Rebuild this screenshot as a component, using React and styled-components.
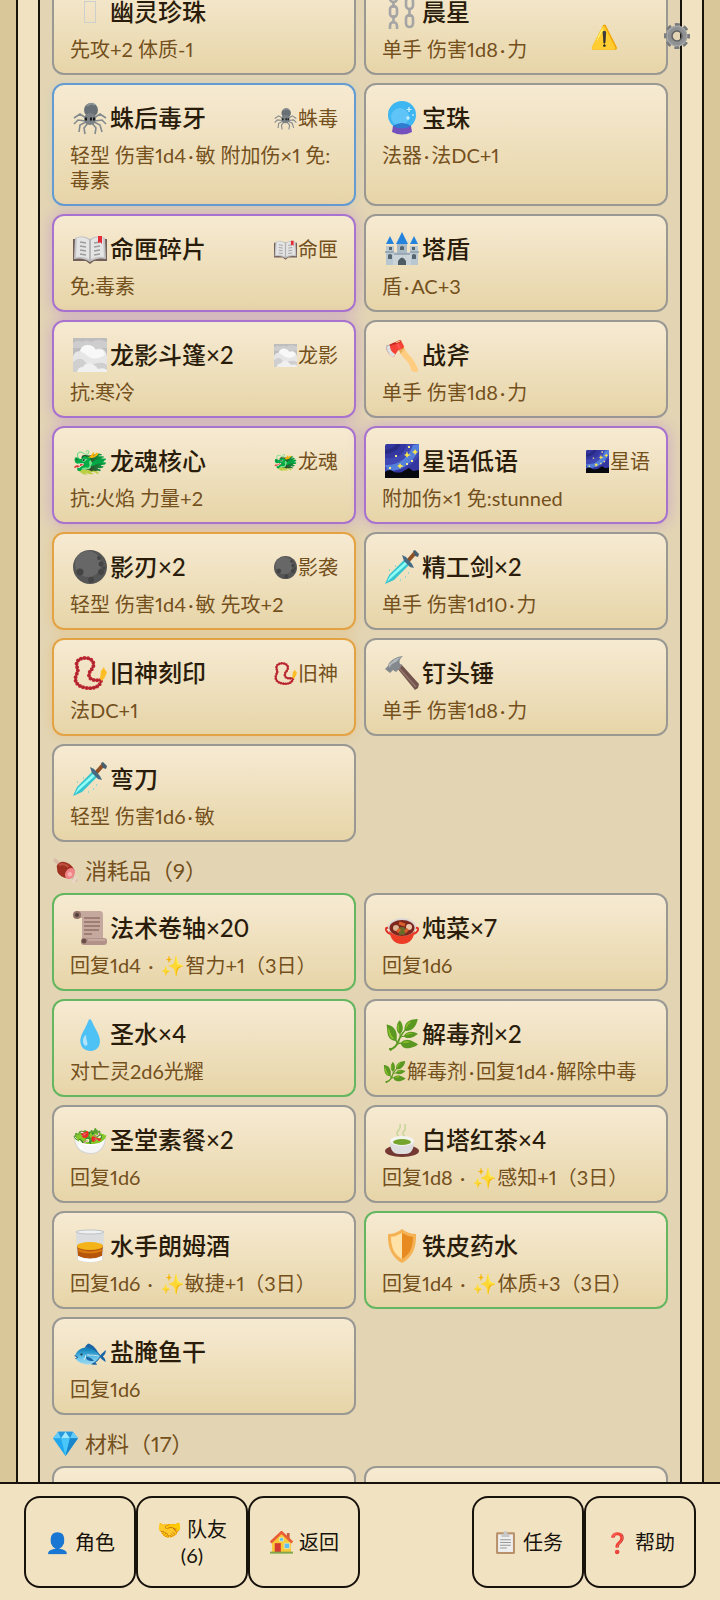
import { Fragment } from "react";
import styled, { createGlobalStyle } from "styled-components";

const GlobalStyle = createGlobalStyle`
    *{
        box-sizing: border-box;
    }
    body{
        margin: 0;
        background: #dac799;
        font-family: Lato, "Noto Sans CJK SC", "Noto Color Emoji", sans-serif;
        font-variant-numeric: proportional-nums;
    }
`;

const rarityColors = {
    common: "#999893",
    uncommon: "#65b660",
    rare: "#639bd2",
    epic: "#a872cf",
    legendary: "#e3a345",
};

const rarityGlow = {
    rare: "0 0 8px rgba(99, 155, 210, .15)",
    epic: "0 0 16px rgba(168, 100, 220, .4)",
    legendary: "0 0 12px rgba(230, 160, 60, .3)",
};

const Screen = styled.div`
    display: flex;
    flex-direction: column;
    height: 100vh;
    overflow: hidden;
`;

const Scroller = styled.main`
    flex: 1;
    min-height: 0;
    overflow: hidden;
    padding: 0 16px;
`;

const Panel = styled.div`
    padding: 0 20px;
    background: #f1e3c1;
    border: 2px solid #17120c;
    border-width: 0 2px;
`;

const Bag = styled.div`
    padding: 0 12px 12px;
    margin-top: -23px;
    background: #e3d5b4;
    border: 2px solid #17120c;
    border-width: 0 2px;
`;

const Heading = styled.h2`
    display: flex;
    align-items: center;
    gap: 6px;
    height: 51px;
    margin: 0;
    padding-top: 2px;
    color: #74501c;
    font-size: 22px;
    font-weight: normal;
    svg{
        margin-top: 3px;
    }
`;

const Grid = styled.ul`
    display: grid;
    grid-template-columns: 1fr 1fr;
    gap: 8px;
    margin: 0;
    padding: 0;
    list-style: none;
`;

const Card = styled.li`
    padding: 10px 16px 11px;
    min-height: 98px;
    background: linear-gradient(#f6ead2, #e7d5a8);
    border: 2px solid ${(props) => rarityColors[props.$rarity]};
    border-radius: 12px;
    box-shadow: ${(props) => rarityGlow[props.$rarity] || "none"};
`;

const CardTop = styled.div`
    display: flex;
    align-items: center;
    height: 46px;
    margin-bottom: 2px;
`;

const Icon = styled.span`
    display: flex;
    justify-content: center;
    width: 40px;
    font-size: 29px;
    line-height: 40px;
`;

const Art = styled.svg`
    flex: none;
    width: ${(props) => props.$size}px;
    height: ${(props) => props.$size}px;
    margin: 0 1px;
    vertical-align: text-bottom;
`;

const MissingIcon = styled.span`
    width: 12px;
    height: 22px;
    border: 1px solid #ccd0cc;
`;

const Name = styled.h3`
    flex: 1;
    margin: 0;
    color: #2a1c0a;
    font-size: 24px;
    font-weight: 500;
    line-height: 36px;
`;

const Tag = styled.span`
    display: flex;
    align-items: center;
    color: #74501c;
    font-size: 20px;
    line-height: 25px;
`;

const Desc = styled.p`
    margin: 0;
    color: #74501c;
    font-size: 20px;
    line-height: 25px;
`;

const Dot = styled.span`
    padding: 0 2px;
`;

const TopButtons = styled.div`
    position: fixed;
    top: 12px;
    right: 20px;
    display: flex;
    gap: 26px;
`;

const TopButton = styled.button`
    display: flex;
    align-items: center;
    justify-content: center;
    width: 46px;
    height: 48px;
    padding: 0;
    background: none;
    border: 0;
    font-family: inherit;
    font-size: 23px;
`;

const Nav = styled.nav`
    display: grid;
    grid-template-columns: repeat(6, 1fr);
    padding: 12px 24px;
    background: #f1e3c1;
    border-top: 2px solid #17120c;
`;

const NavButton = styled.button`
    grid-column: ${(props) => props.$column};
    height: 92px;
    padding: 0 12px;
    background: none;
    border: 2px solid #17120c;
    border-radius: 16px;
    color: #17120c;
    font-family: inherit;
    font-size: 20px;
    line-height: 26px;
`;

// all drawings share a 34x34 view box
const drawings = {
    chain: (
        <g fill="none" stroke="#a5a5a5" strokeWidth="2.6">
            <rect x="5" y="-3" width="7" height="10" rx="3.5" />
            <rect x="5" y="11" width="7" height="11" rx="3.5" />
            <path d="M5 34v-3c0-5 7-5 7 0v3M8.500 6v7M8.500 20v8" />
            <rect x="21" y="3" width="7" height="11" rx="3.500" />
            <rect x="21" y="20" width="7" height="12" rx="3.500" />
            <path d="M24.500 0v5M24.500 13v9" />
        </g>
    ),
    spider: (
        <>
            <path
                d="M13 17 7 13 1 17M13 20l-8-1-4 4M13 21l-6 3-1 7M15 22l-4 5 1 6M21 17l6-4 6 4M21 20l8-1 4 4M21 21l6 3 2 7M19 22l4 5-1 6"
                fill="none"
                stroke="#858a8d"
                strokeWidth="1.600"
            />
            <circle cx="18" cy="9" r="7" fill="#697075" />
            <circle cx="17" cy="18" r="6" fill="#7b8185" />
            <path d="M14 5q4-4 8-1" stroke="#8d9397" strokeWidth="2" fill="none" />
            <path d="M12 18h3M17 18h5" stroke="#17191b" strokeWidth="3" strokeDasharray="2 1" />
        </>
    ),
    orb: (
        <>
            <circle cx="17" cy="14" r="14" fill="#3db6f1" />
            <circle cx="15" cy="16" r="9" fill="#6dcbfa" opacity=".7" />
            <path d="M8 25q9-5 18 0l1 6q-10 5-20 0z" fill="#7450bd" />
            <path d="M8 25q9 5 18 0-9-6-18 0z" fill="#2e7bd0" />
            <path d="M24 6v5M21.500 8.500h5M23 15v4M21 17h4M28 13v2" stroke="#d5f3ff" strokeWidth="1.200" />
        </>
    ),
    book: (
        <>
            <path d="M0 7h34v22H21l-4 3-4-3H0z" fill="#725f5a" />
            <path d="M2 6q8-4 15 1 7-5 15-1l1 21q-9-2-16 3-7-5-16-3z" fill="#c4c4c4" />
            <path d="M4 6q7-2 12 2v19q-6-3-13-2zM30 6q-7-2-12 2v19q6-3 13-2z" fill="#e4e4e4" />
            <path d="m7 10 6 1M7 14l6 1M7 18l6 1M7 22l6 1M21 11l6-1M21 15l6-1M21 19l6-1M21 23l6-1" stroke="#9c9c9c" strokeWidth="1.300" />
            <path d="M17 7v22" stroke="#aaa" />
            <path d="M25 4h4v8l-2-2-2 1z" fill="#e42b35" />
        </>
    ),
    castle: (
        <>
            <path d="M1 14h8v19H1zM25 14h8v19h-8z" fill="#b9c8d0" />
            <path d="M8 20h18v13H8z" fill="#c9d3d8" />
            <path d="M12 12h10v10H12z" fill="#a9bac4" />
            <path d="M17 0l6 12H11zM5 4l4 8H1zM29 4l4 8h-8z" fill="#2484dd" />
            <path d="M13 33v-4q4-7 8 0v4z" fill="#505c64" />
            <path d="M15 18v-3q2-2 4 0v3zM4 18v-3h3v3zM27 18v-3h3v3zM3 27v-4q2-2 4 0v4zM27 27v-4q2-2 4 0v4z" fill="#54656f" />
            <path d="M0 20h9M25 20h9M9 22h16" stroke="#8ea0ab" strokeWidth="1.500" />
        </>
    ),
    fog: (
        <>
            <path d="M0 0h34v34H0z" fill="#bdbdbd" />
            <path d="M0 5q5-4 9-1 5-3 9 0 7-4 16 0v6H0z" fill="#cdcdcd" />
            <path d="M0 19q1-6 7-6 2-7 9-6 5 1 6 4 10-3 12 7v11H0z" fill="#e6e6e6" />
            <path d="M7 13q2-7 9-6 5 1 7 5 8-2 9 5-9 6-16 2-5-4-9-6z" fill="#f8f8f8" />
            <path d="M0 24q8-7 13 1 6 3 8 1 9-3 13 1v7H0z" fill="#cfcfcf" />
            <path d="M4 34q1-5 6-5 4-7 11-2 3 2 4 4 6-2 9 1v2z" fill="#f0f0f0" />
        </>
    ),
    galaxy: (
        <>
            <rect width="34" height="34" rx="2" fill="#3437a0" />
            <path d="M0 14Q18 16 22 0h12v12Q23 28 0 27z" fill="#4048b4" />
            <path d="M0 21Q20 22 28 1l6-1v6Q23 27 3 27z" fill="#5480dc" />
            <path d="M0 8q10-1 14-8" stroke="#282b83" strokeWidth="4" fill="none" />
            <path d="m22 7 1 3 3 1-3 1-1 2-1-2-2-1 2-1zM30 5l1 2 2 1-2 1-1 2-1-2-2-1 2-1zM15 19l1 2 3 1-3 1-1 2-1-2-2-1 2-1z" fill="#ffe74a" />
            <path d="M11 11v2M24 2v2M27 16v2M5 23v2M22 19v2" stroke="#f0e78a" strokeWidth="2" />
            <path d="M0 28q5-4 9 0 4 1 8 0l7-4 4 3 6-1v8H0z" fill="#08080f" />
        </>
    ),
    moon: (
        <>
            <circle cx="17" cy="17" r="17" fill="#555" />
            <circle cx="15" cy="14" r="13" fill="#6c6c6c" opacity=".8" />
            <g fill="#444">
                <circle cx="7" cy="22" r="3.500" />
                <circle cx="18" cy="30" r="3" />
                <circle cx="26" cy="8" r="2" />
                <circle cx="28" cy="14" r="2.500" />
                <circle cx="28" cy="22" r="3" />
                <circle cx="31" cy="18" r="1.500" />
            </g>
        </>
    ),
    dagger: (
        <>
            <path d="M0 34 4 25 20 9l5 5L9 30z" fill="#36c4cf" />
            <path d="m2 32 3-6 16-15 2 2z" fill="#91fff7" />
            <path d="m22 12 8-9" stroke="#8e5024" strokeWidth="4" />
            <path d="m17 5 4 2 6 7 2 4-4-1-6-6z" fill="#456a82" />
            <path d="m28 1 2-1 4 4-1 3-3-1z" fill="#476071" />
            <path d="M4 20h1M10 16h1M15 30h1M23 23h1M20 27h1" stroke="#75d5d7" strokeWidth="1.500" />
        </>
    ),
    beads: (
        <>
            <path
                d="M28 25c-1 6-8 8-14 7C4 31 1 25 3 20c1-4 3-5 1-9C2 5 7 2 12 2c7 0 10 5 8 9-1 3-4 4-4 8 0 5 6 6 12 5"
                fill="none"
                stroke="#c32934"
                strokeWidth="4"
                strokeLinecap="round"
                strokeDasharray="0 3.500"
            />
            <path
                d="M28 25c-1 6-8 8-14 7C4 31 1 25 3 20c1-4 3-5 1-9C2 5 7 2 12 2c7 0 10 5 8 9-1 3-4 4-4 8 0 5 6 6 12 5"
                fill="none"
                stroke="#a82530"
                strokeWidth="1.200"
            />
            <path d="m27 23 1-8 3-4 1 3 2 2-2 5-3 4z" fill="#ffbd24" />
        </>
    ),
    hammer: (
        <>
            <path d="m12 12 4-4 18 20-1 4-3 2z" fill="#73544d" />
            <path d="m14 12 17 19" stroke="#95766d" strokeWidth="1.500" />
            <path d="M0 13l3-3 1-3q5-6 14-7-5 4-3 8l2 2-6 6-3-2-3 3z" fill="#83898c" />
            <path d="m4 8 6-5 6-2-5 5-4 2-3 4z" fill="#b4b9bb" />
        </>
    ),
    meat: (
        <>
            <path d="M3 3 9 9M26 26l5 4" stroke="#d9bda9" strokeWidth="5" strokeLinecap="round" />
            <path d="M28 32l3-5" stroke="#ead5c6" strokeWidth="4" strokeLinecap="round" />
            <path d="M5 11q4-8 13-5 8 3 11 10 1 12-8 12Q9 26 6 19z" fill="#a0301f" />
            <path d="M8 10q6-4 13 2" stroke="#bd5340" strokeWidth="3" fill="none" />
            <ellipse cx="23" cy="21" rx="6" ry="8" fill="#ef8489" transform="rotate(35 23 21)" />
            <circle cx="23" cy="22" r="3" fill="#f9b1b0" />
        </>
    ),
    scroll: (
        <>
            <path d="M3 0h24q3 0 3 4v25H9V7H3z" fill="#c5a89e" />
            <path d="M11 7h16M11 11h16M11 15h16M11 19h15M11 23h8" stroke="#937167" strokeWidth="1.300" />
            <circle cx="4" cy="4" r="4" fill="#947168" />
            <circle cx="4" cy="4" r="2" fill="#51403c" />
            <rect x="8" y="27" width="26" height="7" rx="3" fill="#b39389" />
            <circle cx="11" cy="30" r="2.500" fill="#6b504a" />
            <path d="M15 29h17" stroke="#d6bdb2" />
        </>
    ),
    stew: (
        <>
            <path d="M5 17q-5-1-4 2 1 3 5 4M29 17q5-1 4 2-1 3-5 4" fill="none" stroke="#df3528" strokeWidth="2" />
            <path d="M4 17h26q-1 16-13 16T4 17" fill="#ec3d26" />
            <ellipse cx="17" cy="16" rx="14" ry="9" fill="#dcd6d6" />
            <ellipse cx="17" cy="17" rx="12.500" ry="8" fill="#7c261e" />
            <circle cx="11" cy="17" r="3" fill="#dbb495" />
            <circle cx="24" cy="16" r="3" fill="#e9c7a8" />
            <circle cx="17" cy="20" r="4" fill="#6a6b28" />
            <path d="m14 12 6 2M20 21l3-3M12 21l3-3" stroke="#d85f2b" strokeWidth="3" />
        </>
    ),
    tea: (
        <>
            <path d="M14 14q-4-4 0-7 2-3 1-6M20 14q-4-4 0-7V1" stroke="#c8d59c" strokeWidth="1.600" fill="none" />
            <ellipse cx="17" cy="28" rx="17" ry="6" fill="#743932" />
            <path d="M5 18h24q0 13-9 13h-6Q5 31 5 18" fill="#dedede" />
            <ellipse cx="17" cy="18" rx="12" ry="5" fill="#f4f4ef" />
            <ellipse cx="17" cy="19" rx="9" ry="3" fill="#74a42b" />
        </>
    ),
    rum: (
        <>
            <path d="M3 2h28l-1 29q-13 5-26 0z" fill="#dadcdd" />
            <path d="M4 16h26l-1 11q-12 5-24 0z" fill="#b5560c" />
            <ellipse cx="17" cy="17" rx="13" ry="4" fill="#f4b319" />
            <path d="M5 21q12 5 24 0" stroke="#d97b10" strokeWidth="2" fill="none" />
            <path d="M5 27q12 6 24 0v4q-12 4-24 0z" fill="#fff" />
            <ellipse cx="17" cy="3" rx="14" ry="2" fill="#eef0f1" stroke="#bec3c5" />
        </>
    ),
    shield: (
        <>
            <path d="M17 0q6 5 14 5 1 21-14 29Q2 26 3 5q8 0 14-5" fill="#f5b255" />
            <path d="M17 4q-5 3-11 4 0 16 11 22z" fill="#ffe2a8" />
            <path d="M17 4q5 3 11 4 0 16-11 22z" fill="#e78b20" />
        </>
    ),
    gear: (
        <g fill="none">
            <circle cx="17" cy="17" r="13.500" stroke="#77797b" strokeWidth="7" strokeDasharray="5.900 4.700" strokeDashoffset="2.950" />
            <circle cx="17" cy="17" r="10" stroke="#8e9092" strokeWidth="7" />
            <circle cx="17" cy="17" r="13" stroke="#a8aaab" strokeWidth="1.500" />
            <circle cx="17" cy="17" r="6.500" stroke="#606264" strokeWidth="2" />
        </g>
    ),
    gem: (
        <>
            <path d="M7 1h20l7 9-17 24L0 10z" fill="#20a7ed" />
            <path d="m7 1 4 9H0zM27 1l-4 9h11z" fill="#65ccfa" />
            <path d="m7 1 10 0-6 9zM17 1h10l-4 9z" fill="#2899dc" />
            <path d="m17 1 6 9H11z" fill="#a2e8ff" />
            <path d="m11 10 6 24 6-24z" fill="#4ac7fa" />
            <path d="m23 10-6 24 17-24z" fill="#1986cc" />
        </>
    ),
    house: (
        <>
            <path d="M3 15 17 3l14 12v17H3z" fill="#f9c938" />
            <path d="M25 3h4v9h-4z" fill="#c95b38" />
            <path d="m1 17 16-15 16 15" fill="none" stroke="#e95e37" strokeWidth="4" />
            <path d="M7 18h9v14H7z" fill="#d63c30" />
            <path d="M21 18h8v8h-8zM14 10h6v5h-6z" fill="#62bdf0" stroke="#fff2ad" />
            <path d="M0 32h34" stroke="#82a84b" strokeWidth="3" />
        </>
    ),
    clipboard: (
        <>
            <rect x="3" y="2" width="28" height="32" rx="2" fill="#b8916b" />
            <path d="M6 5h22v26H6z" fill="#eee" />
            <path d="M11 5h3q0-5 3-5t3 5h3v4H11z" fill="#c5c7c9" />
            <path d="M9 13h16M9 17h16M9 21h16M9 25h10" stroke="#999" strokeWidth="1.500" />
        </>
    ),
};

const gear = [
    { name: "幽灵珍珠", desc: "先攻+2 体质-1" },
    { icon: "chain", name: "晨星", desc: "单手 伤害1d8·力" },
    { icon: "spider", name: "蛛后毒牙", tag: "蛛毒", rarity: "rare", desc: "轻型 伤害1d4·敏 附加伤×1 免:毒素" },
    { icon: "orb", name: "宝珠", desc: "法器·法DC+1" },
    { icon: "book", name: "命匣碎片", tag: "命匣", rarity: "epic", desc: "免:毒素" },
    { icon: "castle", name: "塔盾", desc: "盾·AC+3" },
    { icon: "fog", name: "龙影斗篷×2", tag: "龙影", rarity: "epic", desc: "抗:寒冷" },
    { icon: "🪓", name: "战斧", desc: "单手 伤害1d8·力" },
    { icon: "🐲", name: "龙魂核心", tag: "龙魂", rarity: "epic", desc: "抗:火焰 力量+2" },
    { icon: "galaxy", name: "星语低语", tag: "星语", rarity: "epic", desc: "附加伤×1 免:stunned" },
    { icon: "moon", name: "影刃×2", tag: "影袭", rarity: "legendary", desc: "轻型 伤害1d4·敏 先攻+2" },
    { icon: "dagger", name: "精工剑×2", desc: "单手 伤害1d10·力" },
    { icon: "beads", name: "旧神刻印", tag: "旧神", rarity: "legendary", desc: "法DC+1" },
    { icon: "hammer", name: "钉头锤", desc: "单手 伤害1d8·力" },
    { icon: "dagger", name: "弯刀", desc: "轻型 伤害1d6·敏" },
];

const consumables = [
    { icon: "scroll", name: "法术卷轴×20", rarity: "uncommon", desc: "回复1d4 · ✨智力+1（3日）" },
    { icon: "stew", name: "炖菜×7", desc: "回复1d6" },
    { icon: "💧", name: "圣水×4", rarity: "uncommon", desc: "对亡灵2d6光耀" },
    { icon: "🌿", name: "解毒剂×2", desc: "🌿解毒剂·回复1d4·解除中毒" },
    { icon: "🥗", name: "圣堂素餐×2", desc: "回复1d6" },
    { icon: "tea", name: "白塔红茶×4", desc: "回复1d8 · ✨感知+1（3日）" },
    { icon: "rum", name: "水手朗姆酒", desc: "回复1d6 · ✨敏捷+1（3日）" },
    { icon: "shield", name: "铁皮药水", rarity: "uncommon", desc: "回复1d4 · ✨体质+3（3日）" },
    { icon: "🐟", name: "盐腌鱼干", desc: "回复1d6" },
];

const materials = [{}, {}];

function Picture({ name, size }) {
    if (!drawings[name]) {
        return <span>{name}</span>;
    }
    return (
        <Art viewBox="0 0 34 34" $size={size} aria-hidden="true">
            {drawings[name]}
        </Art>
    );
}

function Description({ text }) {
    return (
        <Desc>
            {text.split("·").map((part, i) => (
                <Fragment key={i}>
                    {i > 0 && <Dot>·</Dot>}
                    {part}
                </Fragment>
            ))}
        </Desc>
    );
}

function ItemGrid({ items }) {
    return (
        <Grid>
            {items.map((item, i) => (
                <Card key={i} $rarity={item.rarity || "common"}>
                    {item.name && (
                        <>
                            <CardTop>
                                <Icon>
                                    {item.icon ? <Picture name={item.icon} size={34} /> : <MissingIcon />}
                                </Icon>
                                <Name>{item.name}</Name>
                                {item.tag && (
                                    <Tag>
                                        <Picture name={item.icon} size={23} />
                                        {item.tag}
                                    </Tag>
                                )}
                            </CardTop>
                            <Description text={item.desc} />
                        </>
                    )}
                </Card>
            ))}
        </Grid>
    );
}

export default function App() {
    return (
        <Screen>
            <GlobalStyle />
            <Scroller>
                <Panel>
                    <Bag>
                        <ItemGrid items={gear} />
                        <Heading><Picture name="meat" size={25} />消耗品（9）</Heading>
                        <ItemGrid items={consumables} />
                        <Heading><Picture name="gem" size={25} />材料（17）</Heading>
                        <ItemGrid items={materials} />
                    </Bag>
                </Panel>
            </Scroller>
            <TopButtons>
                <TopButton aria-label="警告">⚠️</TopButton>
                <TopButton aria-label="设置"><Picture name="gear" size={26} /></TopButton>
            </TopButtons>
            <Nav>
                <NavButton $column={1}>👤 角色</NavButton>
                <NavButton $column={2}>🤝 队友 (6)</NavButton>
                <NavButton $column={3}><Picture name="house" size={23} /> 返回</NavButton>
                <NavButton $column={5}><Picture name="clipboard" size={23} /> 任务</NavButton>
                <NavButton $column={6}>❓ 帮助</NavButton>
            </Nav>
        </Screen>
    );
}
